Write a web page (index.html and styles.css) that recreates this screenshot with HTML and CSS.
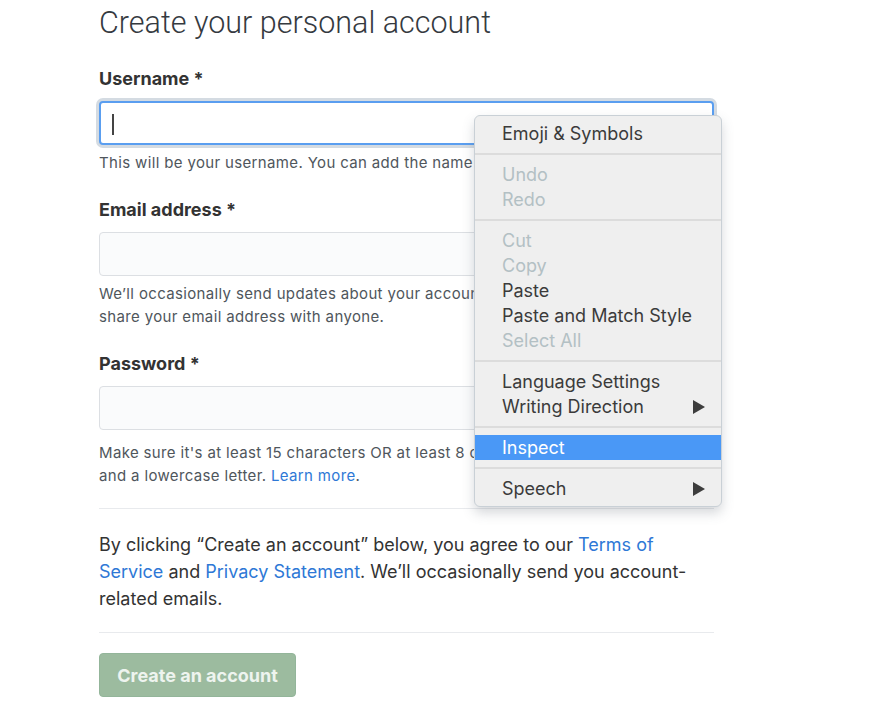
FILE: index.html
```html
<!DOCTYPE html>
<html lang="en">
<head>
<meta charset="utf-8">
<title>Create your personal account</title>
<link rel="stylesheet" href="styles.css">
</head>
<body>
<main class="page">
  <h1 class="title">Create your personal account</h1>

  <div class="group">
    <label class="label">Username *</label>
    <div class="input focused"><span class="caret"></span></div>
    <p class="note note-user">This will be your username. You can add the name of your organization later.</p>
  </div>

  <div class="group">
    <label class="label">Email address *</label>
    <div class="input"></div>
    <p class="note note-email">We’ll occasionally send updates about your account to your inbox. We'll never share your email address with anyone.</p>
  </div>

  <div class="group">
    <label class="label">Password *</label>
    <div class="input"></div>
    <p class="note note-pass">Make sure it's at least 15 characters OR at least 8 characters including a number and a lowercase letter. <a class="link" href="#">Learn more</a>.</p>
  </div>

  <hr class="rule rule-top">
  <p class="terms">By clicking “Create an account” below, you agree to our <a class="link" href="#">Terms of Service</a> and <a class="link" href="#">Privacy Statement</a>. We’ll occasionally send you account-related emails.</p>
  <hr class="rule rule-bottom">

  <button class="submit" type="button">Create an account</button>
</main>

<div class="menu">
  <div class="item">Emoji &amp; Symbols</div>
  <div class="sep"></div>
  <div class="item off">Undo</div>
  <div class="item off">Redo</div>
  <div class="sep"></div>
  <div class="item off">Cut</div>
  <div class="item off">Copy</div>
  <div class="item">Paste</div>
  <div class="item">Paste and Match Style</div>
  <div class="item off">Select All</div>
  <div class="sep"></div>
  <div class="item">Language Settings</div>
  <div class="item">Writing Direction <svg class="arrow" viewBox="0 0 12 14" width="12" height="14"><polygon points="0,0 12,7 0,14" fill="#3d3d3d"/></svg></div>
  <div class="sep"></div>
  <div class="item active">Inspect</div>
  <div class="sep"></div>
  <div class="item">Speech <svg class="arrow" viewBox="0 0 12 14" width="12" height="14"><polygon points="0,0 12,7 0,14" fill="#3d3d3d"/></svg></div>
</div>
</body>
</html>
```

FILE: styles.css
```css
* { box-sizing: border-box; }

html, body {
  margin: 0;
  padding: 0;
  background: #ffffff;
}

body {
  font-family: Inter, "Liberation Sans", Arial, sans-serif;
  color: #333333;
  width: 880px;
  height: 720px;
  overflow: hidden;
  position: relative;
}

.page {
  width: 615px;
  margin-left: 99px;
  padding-top: 1px;
  display: flex;
  flex-direction: column;
}

.title {
  margin: 0 0 22px;
  font-family: Roboto, "Liberation Sans", sans-serif;
  font-size: 30.5px;
  font-weight: 300;
  line-height: 44px;
  color: #353a3f;
}

.group {
  display: flex;
  flex-direction: column;
}

.label {
  font-size: 18px;
  font-weight: 700;
  line-height: 24px;
  color: #333;
  margin-bottom: 10px;
}

.input {
  height: 44px;
  border: 1px solid #dcdfe3;
  border-radius: 4px;
  background: #fafbfc;
  position: relative;
}

.input.focused {
  border: 2px solid #5a9ef0;
  background: #ffffff;
  box-shadow: 0 0 0 3px #d4dbe2;
}

.caret {
  position: absolute;
  left: 11px;
  top: 11px;
  width: 2px;
  height: 21px;
  background: #444;
}

.note {
  margin: 0;
  font-size: 15px;
  line-height: 23px;
  letter-spacing: 0.35px;
  color: #4f565c;
}

.note-user { margin-top: 6px; margin-bottom: 24px; white-space: nowrap; }
.note-email { margin-top: 6px; margin-bottom: 24px; }
.note-pass { margin-top: 11px; }

.link {
  color: #2e78d6;
  text-decoration: none;
}

.rule {
  width: 100%;
  margin: 0;
  border: 0;
  border-top: 1px solid #e8eaed;
}

.rule-top { margin-top: 21px; }

.terms {
  margin: 22px 0 20px;
  font-size: 18px;
  line-height: 27px;
  color: #333;
}

.rule-bottom { margin-bottom: 20px; }

.submit {
  align-self: flex-start;
  width: 197px;
  height: 44px;
  border: 1px solid #93b59a;
  border-radius: 4px;
  background: #9cbb9f;
  color: #eef4ef;
  font-family: Inter, "Liberation Sans", Arial, sans-serif;
  font-size: 18px;
  font-weight: 700;
  padding: 0;
}

.menu {
  position: absolute;
  left: 474px;
  top: 115px;
  width: 248px;
  padding: 5px 0 5px;
  background: #efefef;
  border: 1px solid #c9d0d6;
  border-radius: 6px;
  box-shadow: 0 6px 12px rgba(90, 100, 110, 0.25);
  font-family: Inter, "Liberation Sans", Arial, sans-serif;
}

.item {
  height: 25px;
  line-height: 25px;
  padding-left: 27px;
  padding-right: 16px;
  font-size: 18px;
  color: #3b3b3b;
  display: flex;
  align-items: center;
  justify-content: space-between;
}

.item.off { color: #b3c0c4; }

.item.active {
  background: #4a98f6;
  color: #ffffff;
}

.sep {
  height: 16px;
  display: flex;
  align-items: center;
}

.sep::before {
  content: "";
  display: block;
  width: 100%;
  height: 2px;
  background: #dcdcdc;
}

.arrow { display: block; }
```
